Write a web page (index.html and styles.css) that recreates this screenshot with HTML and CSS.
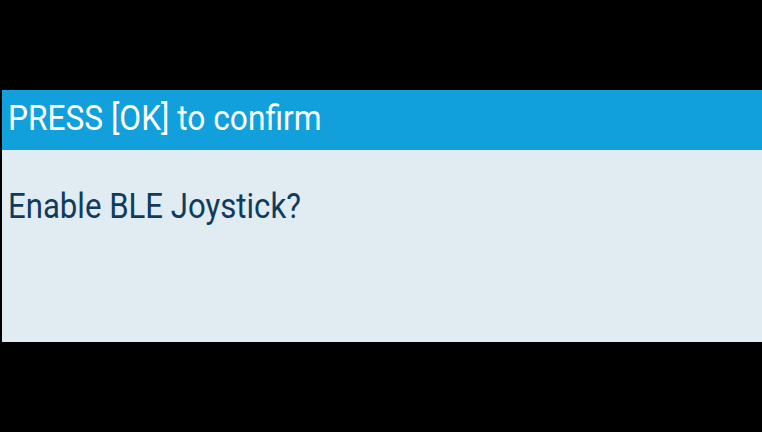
FILE: index.html
```html
<!DOCTYPE html>
<html>
<head>
<meta charset="utf-8">
<link rel="stylesheet" href="styles.css">
</head>
<body>
<div class="screen">
  <div class="dialog">
    <div class="header"><span class="text">PRESS [OK] to confirm</span></div>
    <div class="body">
      <span class="text message">Enable BLE Joystick?</span>
    </div>
  </div>
</div>
</body>
</html>
```

FILE: styles.css
```css
html, body {
  margin: 0;
  padding: 0;
  background: #000;
  width: 762px;
  height: 432px;
  overflow: hidden;
}
.screen {
  display: flex;
  flex-direction: column;
  padding: 90px 0 0 2px;
}
.dialog {
  display: flex;
  flex-direction: column;
  width: 760px;
  font-family: Roboto, "Noto Sans", sans-serif;
  font-size: 35px;
  line-height: 35px;
}
.text {
  display: inline-block;
  transform: scaleX(0.905);
  transform-origin: left center;
  white-space: nowrap;
}
.message {
  transform: scaleX(0.89);
}
.header {
  height: 60px;
  box-sizing: border-box;
  background: #12a0dd;
  color: #ffffff;
  padding: 11px 0 0 6px;
}
.body {
  height: 192px;
  box-sizing: border-box;
  background: #e0ecf1;
  color: #0f3b5e;
  padding: 39px 0 0 6px;
}
```
